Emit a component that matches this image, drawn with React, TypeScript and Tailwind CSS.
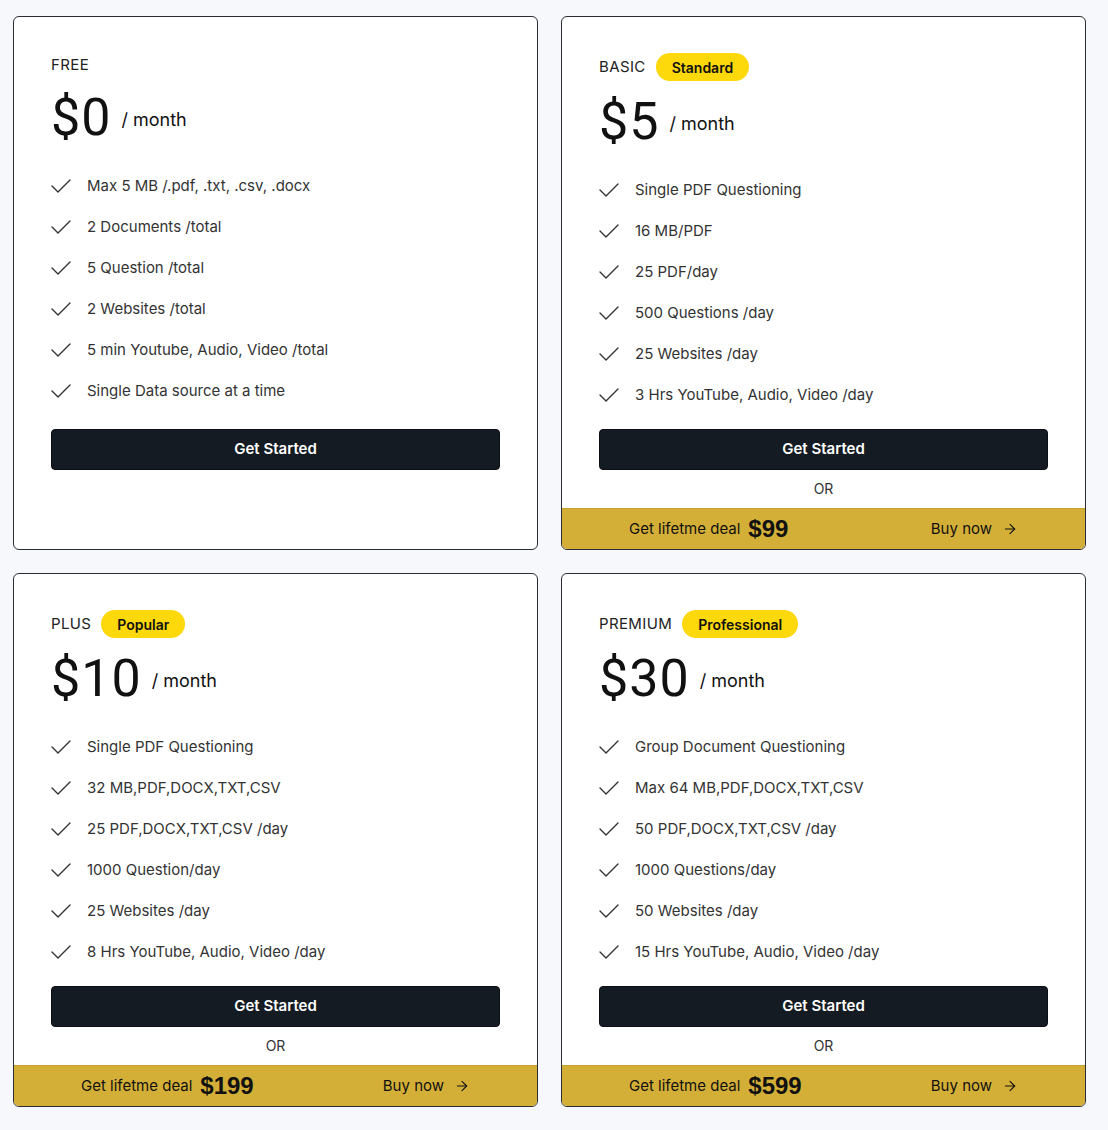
import { ArrowRight } from "lucide-react";

type Plan = {
  name: string;
  badge?: string;
  price: string;
  features: string[];
  lifetime?: string;
};

const plans: Plan[] = [
  {
    name: "FREE",
    price: "$0",
    features: [
      "Max 5 MB /.pdf, .txt, .csv, .docx",
      "2 Documents /total",
      "5 Question /total",
      "2 Websites /total",
      "5 min Youtube, Audio, Video /total",
      "Single Data source at a time",
    ],
  },
  {
    name: "BASIC",
    badge: "Standard",
    price: "$5",
    features: [
      "Single PDF Questioning",
      "16 MB/PDF",
      "25 PDF/day",
      "500 Questions /day",
      "25 Websites /day",
      "3 Hrs YouTube, Audio, Video /day",
    ],
    lifetime: "$99",
  },
  {
    name: "PLUS",
    badge: "Popular",
    price: "$10",
    features: [
      "Single PDF Questioning",
      "32 MB,PDF,DOCX,TXT,CSV",
      "25 PDF,DOCX,TXT,CSV /day",
      "1000 Question/day",
      "25 Websites /day",
      "8 Hrs YouTube, Audio, Video /day",
    ],
    lifetime: "$199",
  },
  {
    name: "PREMIUM",
    badge: "Professional",
    price: "$30",
    features: [
      "Group Document Questioning",
      "Max 64 MB,PDF,DOCX,TXT,CSV",
      "50 PDF,DOCX,TXT,CSV /day",
      "1000 Questions/day",
      "50 Websites /day",
      "15 Hrs YouTube, Audio, Video /day",
    ],
    lifetime: "$599",
  },
];

function CheckMark() {
  return (
    <svg width="20" height="14" viewBox="0 0 20 14" fill="none" className="shrink-0">
      <path d="M1 7l6 6L19 1" stroke="#333" strokeWidth="1.4" strokeLinecap="round" strokeLinejoin="round" />
    </svg>
  );
}

function PlanCard({ plan }: { plan: Plan }) {
  return (
    <div className="flex flex-col bg-white border border-[#2a2d33] rounded-[6px] overflow-hidden">
      <div className="px-[37px] pt-9 flex-1">
        {/* title */}
        <div className={`flex items-center gap-2.5 ${plan.badge ? "h-7" : "h-6"}`}>
          <span className="text-[15px] text-[#222] tracking-wide">{plan.name}</span>
          {plan.badge && (
            <span className="h-7 px-4 rounded-full bg-[#fdd80b] text-[14px] font-semibold text-[#111] flex items-center">
              {plan.badge}
            </span>
          )}
        </div>

        {/* price */}
        <div className="mt-[15px] flex items-center h-[52px]">
          <span className="font-['Roboto',sans-serif] text-[52px] leading-none text-[#111] tracking-[1px]">
            {plan.price}
          </span>
          <span className="ml-2.5 text-[18px] text-[#111] mt-0.5">/ month</span>
        </div>

        {/* features */}
        <ul className="mt-[30px] flex flex-col gap-[17px]">
          {plan.features.map((f) => (
            <li key={f} className="flex items-center h-6 gap-4 text-[15px] text-[#333]">
              <CheckMark />
              <span>{f}</span>
            </li>
          ))}
        </ul>

        <button
          className={`${plan.badge ? "mt-[22px]" : "mt-[26px]"} w-full h-[41px] rounded-[4px] bg-[#151b22] border border-[#0b0f14] text-white text-[15px] font-semibold`}
        >
          Get Started
        </button>

        {plan.lifetime && (
          <div className="mt-2 mb-2.5 h-5 flex items-center justify-center text-[14px] text-[#333]">OR</div>
        )}
      </div>

      {plan.lifetime && (
        <div className="h-[41px] bg-[#d4af37] border-t border-[#c9a22e] px-[67px] flex items-center justify-between text-[#111]">
          <div className="flex items-center gap-2">
            <span className="text-[15px]">Get lifetme deal</span>
            <span className="font-['Liberation_Sans',Arial,sans-serif] font-bold text-[24px] leading-none">
              {plan.lifetime}
            </span>
          </div>
          <div className="flex items-center gap-2.5">
            <span className="text-[15px]">Buy now</span>
            <ArrowRight className="w-4 h-4" strokeWidth={1.6} />
          </div>
        </div>
      )}
    </div>
  );
}

export default function App() {
  return (
    <div className="min-h-[1130px] bg-[#f7f8fc] pl-[13px] pr-[22px] pt-4 pb-[22px] font-['Inter',sans-serif]">
      <div className="grid grid-cols-2 gap-[23px]">
        {plans.map((p) => (
          <PlanCard key={p.name} plan={p} />
        ))}
      </div>
    </div>
  );
}
